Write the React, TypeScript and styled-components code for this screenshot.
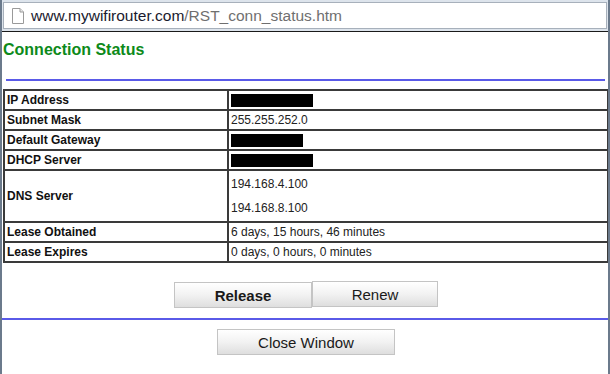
import styled, { createGlobalStyle } from "styled-components";

const GlobalStyle = createGlobalStyle`
  html, body {
    margin: 0;
    padding: 0;
    background: #ffffff;
  }
`;

const rows = [
  { label: "IP Address", value: null, redact: 82 },
  { label: "Subnet Mask", value: ["255.255.252.0"] },
  { label: "Default Gateway", value: null, redact: 72 },
  { label: "DHCP Server", value: null, redact: 82 },
  { label: "DNS Server", value: ["194.168.4.100", "194.168.8.100"] },
  { label: "Lease Obtained", value: ["6 days, 15 hours, 46 minutes"] },
  { label: "Lease Expires", value: ["0 days, 0 hours, 0 minutes"] },
];

export default function App() {
  return (
    <>
      <GlobalStyle />
      <Window>
        <AddressBar>
          <UrlBox>
            <PageIcon viewBox="0 0 12 16">
              <path d="M0.5 0.5 H8 L11.5 4 V15.5 H0.5 Z" fill="#fff" stroke="#9a9a9a" />
              <path d="M8 0.5 V4 H11.5" fill="#e8e8e8" stroke="#9a9a9a" />
            </PageIcon>
            <Host>www.mywifirouter.com</Host>
            <PathText>/RST_conn_status.htm</PathText>
          </UrlBox>
        </AddressBar>
        <Content>
          <Title>Connection Status</Title>
          <Rule $inset />
          <StatusTable>
            <tbody>
              {rows.map((row) => {
                const tall = !!row.value && row.value.length > 1;
                return (
                  <Row key={row.label} $tall={tall}>
                    <Label>{row.label}</Label>
                    <Value $tall={tall}>
                      {row.value ? (
                        row.value.map((v) => <Line key={v}>{v}</Line>)
                      ) : (
                        <Redacted style={{ width: row.redact }} />
                      )}
                    </Value>
                  </Row>
                );
              })}
            </tbody>
          </StatusTable>
          <ButtonRow>
            <Button $bold $width={138}>Release</Button>
            <Button $width={126} $raise>Renew</Button>
          </ButtonRow>
          <Rule />
          <ButtonRow $close>
            <Button $width={178}>Close Window</Button>
          </ButtonRow>
        </Content>
      </Window>
    </>
  );
}

const Window = styled.div`
  width: 610px;
  height: 374px;
  box-sizing: border-box;
  border-left: 2px solid #6b7a8c;
  border-right: 2px solid #6b7a8c;
  overflow: hidden;
  font-family: "Liberation Sans", Arial, sans-serif;
  background: #fff;
`;

const AddressBar = styled.div`
  height: 32px;
  box-sizing: border-box;
  background: #dde4ec;
  padding: 2px 1px;
  border-bottom: 1px solid #1a1a1a;
`;

const UrlBox = styled.div`
  height: 27px;
  box-sizing: border-box;
  background: #fff;
  border: 1px solid #a7b0bb;
  display: flex;
  align-items: center;
  padding-left: 8px;
  font-size: 15.5px;
`;

const PageIcon = styled.svg`
  width: 12px;
  height: 16px;
  margin-right: 7px;
`;

const Host = styled.span`
  color: #1a1a2e;
`;

const PathText = styled.span`
  color: #6f6f6f;
`;

const Content = styled.div`
  padding: 0;
`;

const Title = styled.h1`
  margin: 9px 0 0 1px;
  font-size: 16px;
  font-weight: bold;
  color: #0d8a1a;
  height: 21px;
`;

const Rule = styled.div<{ $inset?: boolean }>`
  height: 2px;
  background: #5a5ae8;
  margin: ${({ $inset }) => ($inset ? "17px 3px 8px 4px" : "10px 0 0 0")};
`;

const StatusTable = styled.table`
  width: 606px;
  margin-left: 1px;
  border-collapse: collapse;
  border: 2px solid #3a3a3a;
  font-size: 12px;
`;

const Row = styled.tr<{ $tall?: boolean }>`
  height: ${({ $tall }) => ($tall ? "52px" : "20px")};
`;

const Label = styled.td`
  width: 218px;
  border: 2px solid #3a3a3a;
  padding: 0 2px;
  font-weight: bold;
  color: #111;
  vertical-align: middle;
`;

const Value = styled.td<{ $tall?: boolean }>`
  border: 2px solid #3a3a3a;
  padding: ${({ $tall }) => ($tall ? "0 2px 1px" : "0 2px")};
  color: #222;
  vertical-align: middle;
  line-height: ${({ $tall }) => ($tall ? "24px" : "16px")};
`;

const Line = styled.div``;

const Redacted = styled.div`
  height: 13px;
  background: #000;
  margin-top: 1px;
`;

const ButtonRow = styled.div<{ $close?: boolean }>`
  display: flex;
  justify-content: center;
  align-items: flex-start;
  margin-top: ${({ $close }) => ($close ? "9px" : "19px")};
  padding-left: 2px;
`;

const Button = styled.button<{ $bold?: boolean; $width: number; $raise?: boolean }>`
  width: ${({ $width }) => $width}px;
  height: 26px;
  margin-top: ${({ $raise }) => ($raise ? "-1px" : "0")};
  font-family: "Liberation Sans", Arial, sans-serif;
  font-size: 15px;
  font-weight: ${({ $bold }) => ($bold ? "bold" : "normal")};
  color: #1a1a1a;
  background: linear-gradient(#ffffff, #f2f2f2 50%, #dedede);
  border: 1px solid #c4c4c4;
  border-radius: 0;
  padding: 0;
`;
